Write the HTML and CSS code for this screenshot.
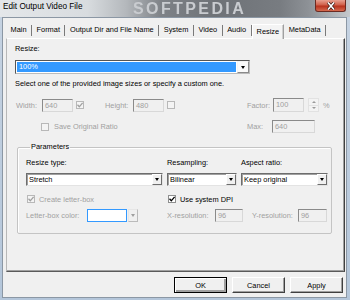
FILE: index.html
```html
<!DOCTYPE html>
<html>
<head>
<meta charset="utf-8">
<link rel="stylesheet" href="styles.css">
</head>
<body>
<div class="window">
  <div class="titlebar">
    <span class="wm">SOFTPEDIA</span>
    <span class="title">Edit Output Video File</span>
    <div class="close"><svg width="12" height="8" viewBox="0 0 12 8"><path d="M3 0.5 L9 7.5 M9 0.5 L3 7.5" stroke="#3a1a14" stroke-width="3"/><path d="M3 0.5 L9 7.5 M9 0.5 L3 7.5" stroke="#fff" stroke-width="1.6"/></svg></div>
  </div>
  <div class="client">
    <div class="tabs">
      <div class="tab">Main</div>
      <div class="tab">Format</div>
      <div class="tab">Output Dir and File Name</div>
      <div class="tab">System</div>
      <div class="tab">Video</div>
      <div class="tab">Audio</div>
      <div class="tab active">Resize</div>
      <div class="tab">MetaData</div>
    </div>
    <div class="panel">
      <div class="line">Resize:</div>
      <div class="combo sel">
        <span class="cval">100%</span>
        <span class="cbtn big"><i class="tri"></i></span>
      </div>
      <div class="line hint">Select one of the provided image sizes or specify a custom one.</div>
      <div class="row dims">
        <span class="dis lbl-w">Width:</span>
        <span class="tbox w31">640</span>
        <span class="chk dis-chk ml3"><svg viewBox="0 0 8 8"><path d="M1.5 3.8 L3.3 5.8 L6.6 1.8" fill="none" stroke="#a0a0a0" stroke-width="1.3"/></svg></span>
        <span class="dis lbl-h">Height:</span>
        <span class="tbox w31">480</span>
        <span class="chk dis-chk ml3"></span>
        <span class="dis lbl-f">Factor:</span>
        <span class="tbox w31 h14">100</span>
        <span class="spin"><span class="sup"><i class="t-up"></i></span><span class="sdn"><i class="t-dn"></i></span></span>
        <span class="dis pct">%</span>
      </div>
      <div class="row ratio">
        <span class="chk dis-chk ml-save"></span>
        <span class="dis save-txt">Save Original Ratio</span>
        <span class="dis lbl-max">Max:</span>
        <span class="tbox w43">640</span>
      </div>
      <fieldset class="group">
        <legend>Parameters</legend>
        <div class="grid">
          <div class="line">Resize type:</div>
          <div class="line">Resampling:</div>
          <div class="line">Aspect ratio:</div>
          <div class="combo"><span class="cval">Stretch</span><span class="cbtn"><i class="tri"></i></span></div>
          <div class="combo"><span class="cval">Bilinear</span><span class="cbtn"><i class="tri"></i></span></div>
          <div class="combo"><span class="cval">Keep original</span><span class="cbtn"><i class="tri"></i></span></div>
          <div class="crow">
            <span class="chk dis-chk"><svg viewBox="0 0 8 8"><path d="M1.5 3.8 L3.3 5.8 L6.6 1.8" fill="none" stroke="#a0a0a0" stroke-width="1.3"/></svg></span>
            <span class="dis ctext">Create letter-box</span>
          </div>
          <div class="crow span2">
            <span class="chk"><svg viewBox="0 0 8 8"><path d="M1.5 3.8 L3.3 5.8 L6.6 1.8" fill="none" stroke="#000" stroke-width="1.3"/></svg></span>
            <span class="ctext">Use system DPI</span>
          </div>
          <div class="brow">
            <span class="dis lbl-lb">Letter-box color:</span>
            <span class="color"></span>
            <span class="cbtn small dis-btn"><i class="tri gray"></i></span>
          </div>
          <div class="brow span2">
            <span class="dis lbl-x">X-resolution:</span>
            <span class="tbox w28">96</span>
            <span class="dis lbl-y">Y-resolution:</span>
            <span class="tbox w29">96</span>
          </div>
        </div>
      </fieldset>
    </div>
    <div class="buttons">
      <button class="btn def">OK</button>
      <button class="btn">Cancel</button>
      <button class="btn">Apply</button>
    </div>
  </div>
</div>
</body>
</html>
```
FILE: styles.css
```css
html, body {
  margin: 0;
  padding: 0;
}
body {
  width: 350px;
  height: 300px;
  overflow: hidden;
  font-family: "Liberation Sans", Arial, sans-serif;
  font-size: 7.4px;
  color: #000;
  background: #fff;
}
.window {
  width: 350px;
  height: 300px;
  box-sizing: border-box;
  padding: 0 3px 2px 2px;
  display: flex;
  flex-direction: column;
  background: linear-gradient(#c6d3e2, #b4c6da);
}
.titlebar {
  position: relative;
  height: 17px;
  margin: 0 -3px 0 -2px;
  overflow: hidden;
  background: linear-gradient(to right, #e4e7ea 0%, #d8dcdf 25%, #b4b8bc 36%, #7e8287 46%, #6e7277 62%, #787c81 80%, #8d9196 88%, #c5c9cd 100%);
}
.title {
  position: relative;
  display: block;
  padding: 2px 0 0 3px;
  font-size: 8.2px;
  line-height: 10px;
  color: #000;
}
.wm {
  position: absolute;
  left: 133px;
  top: 0;
  font-size: 16px;
  font-weight: bold;
  letter-spacing: 2.4px;
  color: #c9ccd0;
  filter: blur(0.6px);
  line-height: 17px;
}
.close {
  position: absolute;
  left: 315px;
  top: 0;
  width: 31px;
  height: 12px;
  box-sizing: border-box;
  border: 1px solid #6b2a21;
  border-top: none;
  border-radius: 0 0 3px 3px;
  background: linear-gradient(#e8a090, #d0604a 45%, #b8321d 55%, #d66a4f);
  display: flex;
  align-items: center;
  justify-content: center;
}
.close svg { display: block; }
.client {
  flex: 1;
  background: #f0f0f0;
  border: 1px solid #8b97a4;
  display: flex;
  flex-direction: column;
}
.tabs {
  display: flex;
  align-items: flex-end;
  height: 15px;
  margin-top: 5px;
  padding-left: 3px;
}
.tab {
  height: 11px;
  line-height: 10px;
  padding: 0 4.5px;
  border-right: 1px solid #7a7a7a;
  margin-bottom: 2px;
  white-space: nowrap;
}
.tab.active {
  height: 15px;
  margin-bottom: -1px;
  line-height: 13px;
  border: 1px solid #a0a0a0;
  border-bottom: none;
  border-top-color: #fff;
  border-left-color: #fff;
  box-shadow: inset -1px 0 #d0d0d0;
  background: #f4f4f4;
  position: relative;
  box-sizing: border-box;
  padding: 0 4px;
}
.panel {
  height: 234px;
  box-sizing: border-box;
  margin: 0 1px 0 3px;
  border: 1px solid;
  border-color: #fff #404040 #5a5a5a #b8b8b8;
  box-shadow: inset -1px -1px #a0a0a0;
  padding: 5px 8px;
}
.line {
  line-height: 10px;
  height: 10px;
  white-space: nowrap;
}
.hint { margin-top: 5px; }
.dis { color: #a0a0a0; white-space: nowrap; }

.combo {
  display: flex;
  height: 13px;
  box-sizing: border-box;
  background: #fff;
  border: 1px solid;
  border-color: #6d6d6d #e3e3e3 #e3e3e3 #6d6d6d;
  box-shadow: inset 1px 1px #a0a0a0;
}
.combo.sel {
  margin-top: 6px;
  width: 235px;
  height: 14px;
  border-color: #555 #bbb #bbb #555;
  box-shadow: none;
}
.cval {
  flex: 1;
  line-height: 11px;
  padding-left: 2px;
  white-space: nowrap;
  overflow: hidden;
}
.combo.sel .cval {
  background: #3399ff;
  color: #fff;
  margin: 1px;
  line-height: 10px;
}
.cbtn {
  width: 10px;
  box-sizing: border-box;
  border: 1px solid;
  border-color: #fff #6d6d6d #6d6d6d #fff;
  background: #f0f0f0;
  display: flex;
  align-items: center;
  justify-content: center;
}
.cbtn.big {
  width: 12px;
  border-color: #f4f4f4 #8a8a8a #8a8a8a #f4f4f4;
  background: #fafafa;
}
.tri {
  display: block;
  width: 0;
  height: 0;
  border-left: 2.5px solid transparent;
  border-right: 2.5px solid transparent;
  border-top: 3px solid #000;
}
.tri.gray { border-top-color: #a0a0a0; }

.row {
  display: flex;
  align-items: center;
}
.dims { margin-top: 9px; height: 14px; }
.ratio { margin-top: 8px; height: 13px; }
.tbox {
  height: 13px;
  box-sizing: border-box;
  border: 1px solid;
  border-color: #8a8a8a #d8d8d8 #d8d8d8 #8a8a8a;
  background: #f0f0f0;
  color: #a0a0a0;
  line-height: 11px;
  padding-left: 2px;
}
.h14 { height: 14px; line-height: 12px; }
.w31 { width: 31px; }
.w43 { width: 43px; }
.w28 { width: 28px; }
.w29 { width: 29px; }
.ml3 { margin-left: 3px; }
.lbl-w { margin-left: 1px; width: 26px; }
.lbl-h { margin-left: 21px; width: 28px; }
.lbl-f { margin-left: 72px; width: 26px; }
.spin {
  margin-left: 4px;
  width: 11px;
  height: 14px;
  display: flex;
  flex-direction: column;
}
.sup, .sdn {
  flex: 1;
  display: flex;
  align-items: center;
  justify-content: center;
  border: 1px solid #e2e2e2;
  background: #f3f3f3;
}
.sdn { border-top: none; }
.t-up, .t-dn {
  width: 0;
  height: 0;
  border-left: 2px solid transparent;
  border-right: 2px solid transparent;
}
.t-up { border-bottom: 2px solid #9a9a9a; }
.t-dn { border-top: 2px solid #9a9a9a; }
.pct { margin-left: 4px; }
.ml-save { margin-left: 26px; }
.save-txt { margin-left: 5px; }
.lbl-max { margin-left: auto; width: 25px; }
.ratio .w43 { margin-right: 21px; }

.chk {
  width: 8px;
  height: 8px;
  box-sizing: border-box;
  border: 1px solid #8e8f8f;
  background: #fff;
  display: inline-block;
  flex: none;
}
.chk svg { display: block; width: 8px; height: 8px; margin: -1px 0 0 -1px; }
.dis-chk { border-color: #b8b8b8; background: #f4f4f4; }

.group {
  margin: 9px 0 0 2px;
  width: 315px;
  box-sizing: border-box;
  border: 1px solid #c4c4c4;
  box-shadow: inset 1px 1px #fff;
  border-radius: 2px;
  padding: 6px 8px 11px 8px;
  min-width: 0;
}
.group legend {
  padding: 0 1px;
  margin-left: 4px;
  line-height: 10px;
  font-size: 7.4px;
}
.grid {
  display: grid;
  grid-template-columns: 137px 70px 87px;
  column-gap: 4px;
}
.grid > .combo { margin-top: 5px; }
.crow {
  margin-top: 8px;
  height: 10px;
  display: flex;
  align-items: center;
}
.crow .chk { margin-left: 1px; }
.ctext { margin-left: 4px; white-space: nowrap; }
.span2 { grid-column: span 2; }
.brow {
  margin-top: 5px;
  height: 13px;
  display: flex;
  align-items: center;
}
.lbl-lb { width: 61px; }
.color {
  width: 40px;
  height: 13px;
  box-sizing: border-box;
  border: 1px solid #3399ff;
  background: #fff;
}
.cbtn.small {
  margin-left: 1px;
  width: 10px;
  height: 13px;
  border-color: #e6e6e6 #bbb #bbb #e6e6e6;
}
.lbl-x { width: 48px; }
.lbl-y { margin-left: 9px; width: 46px; }

.buttons {
  display: flex;
  justify-content: flex-end;
  gap: 5px;
  margin-top: 5px;
  padding-right: 3px;
}
.btn {
  width: 53px;
  height: 16px;
  margin: 0;
  padding: 0;
  box-sizing: border-box;
  font-family: "Liberation Sans", Arial, sans-serif;
  font-size: 7.4px;
  color: #000;
  background: #f0f0f0;
  border: 1px solid;
  border-color: #fff #404040 #404040 #fff;
  box-shadow: inset -1px -1px #a0a0a0;
}
.btn.def {
  border-color: #000;
  box-shadow: inset 1px 1px #fff, inset -2px -2px #a0a0a0;
}
```
